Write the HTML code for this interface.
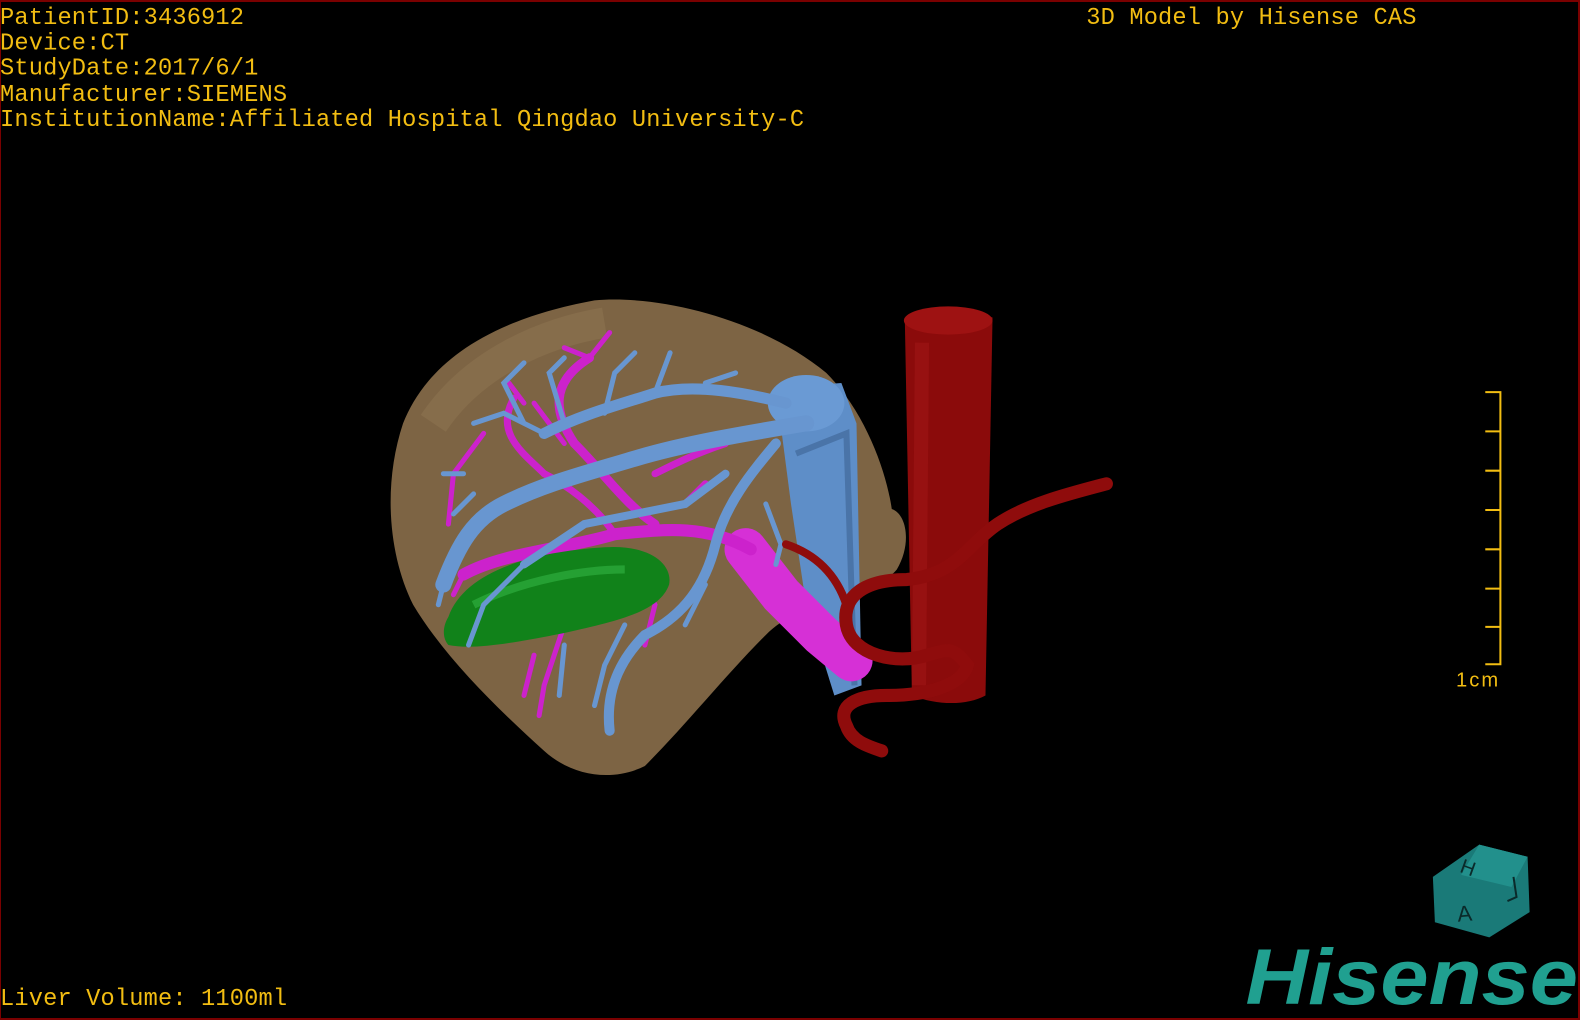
<!DOCTYPE html>
<html><head><meta charset="utf-8"><style>
html,body{margin:0;padding:0;background:#000;overflow:hidden}
#wrap{position:absolute;left:0;top:0;width:1568px;height:1012px;transform-origin:0 0;transform:scale(1.00765,1.0079);background:#000}
#frame{position:absolute;left:0;top:0;width:1580px;height:1020px;box-sizing:border-box;border:1px solid #7a0000;border-width:2px 2px 2px 1px}
.t{position:absolute;color:#f2bd12;font-family:"Liberation Mono",monospace;font-size:23.5px;line-height:25.2px;white-space:pre;letter-spacing:0.15px}
</style></head><body>
<div id="wrap">
<div class="t" style="left:0;top:6px">PatientID:3436912
Device:CT
StudyDate:2017/6/1
Manufacturer:SIEMENS
InstitutionName:Affiliated Hospital Qingdao University-C</div>
<div class="t" style="left:1078px;top:6px">3D Model by Hisense CAS</div>
<div class="t" style="left:0;top:979px">Liver Volume: 1100ml</div>
<div class="t" style="left:1445px;top:663px;font-family:'Liberation Sans',sans-serif;font-size:20px;letter-spacing:2px">1cm</div>
<svg width="1568" height="1012" style="position:absolute;left:0;top:0">
<g stroke="#f2bd12" stroke-width="2" fill="none">
<path d="M1489 389V659M1474 389H1490M1474 428H1490M1474 467H1490M1474 506H1490M1474 545H1490M1474 584H1490M1474 622H1490M1474 659H1490"/>
</g>
<path d="M590 298C660 292 760 320 820 370C860 410 880 470 885 505C900 510 905 540 890 565C870 590 800 590 760 630C720 670 680 720 640 760C610 775 570 772 540 745C490 700 440 650 410 600C385 550 380 480 400 420C420 370 470 320 590 298Z" fill="#7d6444"/>
<path d="M430 420C470 360 540 330 600 320" stroke="#8f7552" stroke-width="30" fill="none" opacity=".5"/>
<path d="M770 385L835 380L850 420L855 680L828 690L800 600L785 500Z" fill="#5e8ec8"/>
<path d="M790 450L840 430L848 680" stroke="#4a74a8" stroke-width="6" fill="none"/>
<ellipse cx="800" cy="400" rx="38" ry="28" fill="#6a9ad4"/>
<path d="M740 545L775 590L815 630L845 655" stroke="#d630d6" stroke-width="42" stroke-linecap="round" fill="none"/>
<g stroke="#cc22cc" fill="none" stroke-linecap="round">
<path d="M745 545C700 520 660 525 610 530C560 545 500 548 460 570" stroke-width="12"/>
<path d="M650 520C620 500 600 470 570 440C550 410 545 380 585 355" stroke-width="9"/>
<path d="M610 530C590 500 560 480 540 470C520 450 490 430 510 395" stroke-width="7"/>
<path d="M560 440L530 400M585 355L605 330M585 355L560 345M520 400L505 380M480 430L450 470M450 470L445 520M460 570L450 590" stroke-width="5"/>
<path d="M630 560L650 600L640 640M560 620L540 680L535 710M530 650L520 690M600 560L610 600" stroke-width="5"/>
<path d="M650 470C670 460 690 450 720 440M680 500L700 480" stroke-width="7"/>
</g>
<path d="M445 612C460 570 520 548 600 543C645 540 668 560 664 580C655 605 620 615 560 628C510 638 470 645 445 640C438 632 440 620 445 612Z" fill="#11821a"/>
<path d="M470 600C520 575 580 565 620 565" stroke="#2ba83a" stroke-width="8" fill="none" opacity=".8"/>
<g stroke="#6896d0" fill="none" stroke-linecap="round">
<path d="M800 420C740 430 680 440 630 455C580 470 540 480 500 500C470 515 455 540 440 580" stroke-width="16"/>
<path d="M780 400C740 390 690 380 650 390C620 400 580 410 540 430" stroke-width="11"/>
<path d="M770 440C745 470 720 500 710 540C700 580 680 610 640 630C620 650 600 680 605 725" stroke-width="10"/>
<path d="M720 470L680 500L630 510L580 520L520 560" stroke-width="8"/>
<path d="M540 430L500 410L470 420M520 420L500 380L520 360M560 420L545 370L560 355M600 410L610 370L630 350M650 390L665 350M700 380L730 370M460 470L440 470M470 490L450 510M440 580L435 600M520 560L480 600L465 640M620 620L600 660L590 700M560 640L555 690M700 580L680 620M760 500L775 540L770 560" stroke-width="5"/>
</g>
<path d="M898 320C920 310 960 306 985 315L978 690C960 700 930 700 905 690Z" fill="#8b0b0b"/>
<ellipse cx="941" cy="318" rx="44" ry="14" fill="#9e1212"/>
<path d="M915 340L912 680" stroke="#a01616" stroke-width="14" fill="none" opacity=".6"/>
<g stroke="#8f0c0c" fill="none" stroke-linecap="round">
<path d="M1098 480C1060 490 1020 500 990 520C960 540 950 570 900 575C860 575 835 590 840 620C845 650 890 660 920 650C940 645 945 640 960 660C955 680 920 690 880 690C850 690 830 700 840 720C845 735 860 740 875 745" stroke-width="13"/>
<path d="M780 540C810 550 830 570 840 600" stroke-width="8"/>
</g>
<g>
<polygon points="1468,838 1516,850 1518,905 1478,930 1424,915 1422,870" fill="#1a7a78"/>
<polygon points="1468,838 1516,850 1500,880 1450,868" fill="#22908c"/>
<text x="1446" y="914" font-family="Liberation Sans,sans-serif" font-size="22" fill="#0a2a2a" transform="rotate(-5 1452 905)">A</text>
<text x="1450" y="868" font-family="Liberation Sans,sans-serif" font-size="20" fill="#0a2a2a" transform="rotate(20 1458 860)">H</text>
<path d="M1496 894L1505 890L1502 870" stroke="#0a2a2a" stroke-width="2" fill="none"/>
</g>
<text x="1236" y="996" font-family="Liberation Sans,sans-serif" font-weight="bold" font-style="italic" font-size="78" fill="#20a090" textLength="330" lengthAdjust="spacingAndGlyphs">Hisense</text>
</svg>
</div>
<div id="frame"></div>
</body></html>
